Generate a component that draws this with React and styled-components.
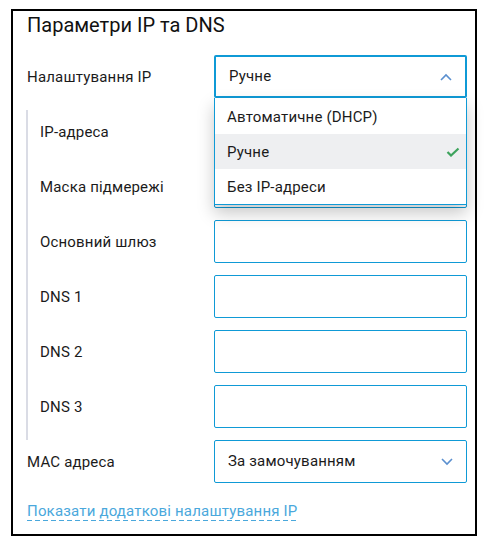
import styled, { createGlobalStyle } from 'styled-components'

const GlobalStyle = createGlobalStyle`
  * { box-sizing: border-box; }
  body {
    margin: 0;
    background: #fff;
    font-family: Roboto, 'Liberation Sans', sans-serif;
    color: #1b1b1b;
  }
`

const ChevronUp = () => (
  <svg width="12" height="8" viewBox="0 0 12 8">
    <path d="M1 7 L6 2 L11 7" fill="none" stroke="#5a8fcf" strokeWidth="1.6" />
  </svg>
)

const ChevronDown = () => (
  <svg width="12" height="8" viewBox="0 0 12 8">
    <path d="M1 1 L6 6 L11 1" fill="none" stroke="#5a8fcf" strokeWidth="1.6" />
  </svg>
)

const Check = () => (
  <svg width="14" height="10" viewBox="0 0 14 10">
    <path d="M1.5 5 L5 8.5 L12.5 1.5" fill="none" stroke="#3da35d" strokeWidth="2.2" />
  </svg>
)

const nested = ['IP-адреса', 'Маска підмережі', 'Основний шлюз', 'DNS 1', 'DNS 2', 'DNS 3']

const App = () => {
  return (
    <>
      <GlobalStyle />
      <Card>
        <Title>Параметри IP та DNS</Title>
        <Row>
          <Label>Налаштування IP</Label>
          <SelectWrap>
            <Select $open>
              <span>Ручне</span>
              <ChevronUp />
            </Select>
            <Menu>
              <Option>Автоматичне (DHCP)</Option>
              <Option $active>
                Ручне
                <Check />
              </Option>
              <Option>Без IP-адреси</Option>
            </Menu>
          </SelectWrap>
        </Row>
        <Group>
          {nested.map((label) => (
            <Row key={label}>
              <Label>{label}</Label>
              <Input />
            </Row>
          ))}
        </Group>
        <Row>
          <Label>MAC адреса</Label>
          <Select>
            <span>За замочуванням</span>
            <ChevronDown />
          </Select>
        </Row>
        <LinkLine>
          <MoreLink>Показати додаткові налаштування IP</MoreLink>
        </LinkLine>
      </Card>
    </>
  )
}

export default App

const Card = styled.div`
  margin: 9px 0 0 11px;
  width: 466px;
  border: 2px solid #000;
  padding: 2px 8px 11px 14px;
  background: #fff;
  letter-spacing: 0.18px;
`

const Title = styled.h2`
  margin: 0 0 18px;
  font-size: 20px;
  font-weight: 400;
  line-height: 24px;
  letter-spacing: 0;
  color: #111;
`

const Row = styled.div`
  display: grid;
  grid-template-columns: 1fr 253px;
  height: 55px;
`

const Label = styled.div`
  height: 43px;
  display: flex;
  align-items: center;
  font-size: 15px;
`

const Group = styled.div`
  margin-left: -1px;
  border-left: 2px solid #dadce5;
  padding-left: 12px;
`

const Input = styled.div`
  height: 43px;
  border: 1.5px solid #0f9ad6;
  border-radius: 2px;
  background: #fff;
`

const SelectWrap = styled.div`
  position: relative;
`

const Select = styled.div`
  height: 43px;
  border: ${(p) => (p.$open ? '2px' : '1.5px')} solid #0f9ad6;
  border-radius: 2px;
  background: #fff;
  display: flex;
  align-items: center;
  justify-content: space-between;
  padding: 0 13px 0 13px;
  font-size: 15px;

  span {
    margin-bottom: 2px;
  }
`

const Menu = styled.div`
  position: absolute;
  top: 43px;
  left: 0;
  right: 0;
  z-index: 2;
  background: #fff;
  border: 1px solid #0f9ad6;
  border-top: none;
  padding-top: 1px;
  box-shadow: 0 8px 16px rgba(0, 0, 0, 0.22);
`

const Option = styled.div`
  height: 35px;
  display: flex;
  align-items: center;
  justify-content: space-between;
  padding: 0 6px 0 12px;
  font-size: 15px;
  background: ${(p) => (p.$active ? '#eeeff1' : '#fff')};
`

const LinkLine = styled.div`
  padding-top: 4px;
  line-height: 24px;
`

const MoreLink = styled.a`
  font-size: 15px;
  color: #4aa8dc;
  padding-bottom: 1px;
  background-image: repeating-linear-gradient(to right, #4aa8dc 0 5px, transparent 5px 8px);
  background-size: 100% 1px;
  background-position: 0 100%;
  background-repeat: no-repeat;
  cursor: pointer;
`
